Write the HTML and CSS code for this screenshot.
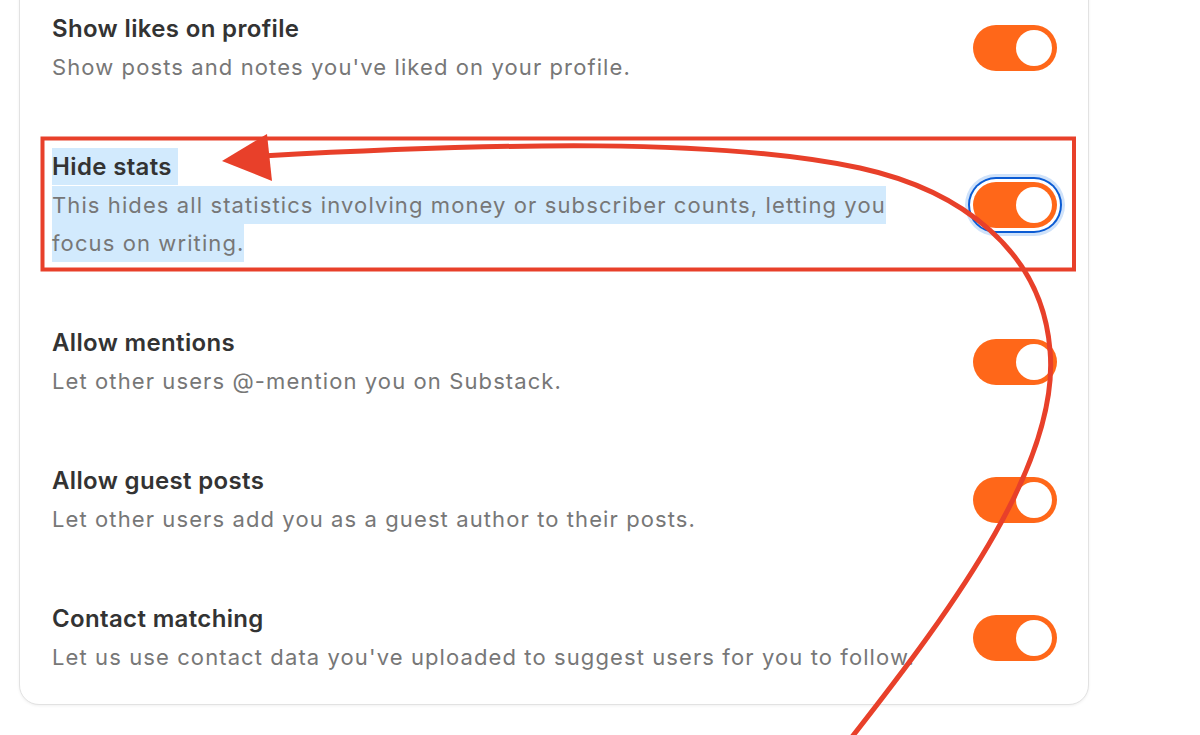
FILE: index.html
```html
<!DOCTYPE html>
<html lang="en">
<head>
<meta charset="utf-8">
<title>Settings</title>
<link rel="stylesheet" href="styles.css">
</head>
<body>
<div class="card">
  <div class="row">
    <div class="text">
      <div class="title">Show likes on profile</div>
      <div class="desc">Show posts and notes you've liked on your profile.</div>
    </div>
    <span class="toggle"><span class="knob"></span></span>
  </div>
  <div class="row">
    <div class="text">
      <div class="title"><span class="sel sel-t">Hide stats</span></div>
      <div class="desc"><span class="sel sel-d">This hides all statistics involving money or subscriber counts, letting you focus on writing.</span></div>
    </div>
    <span class="toggle focus"><span class="knob"></span></span>
  </div>
  <div class="row">
    <div class="text">
      <div class="title">Allow mentions</div>
      <div class="desc">Let other users @-mention you on Substack.</div>
    </div>
    <span class="toggle"><span class="knob"></span></span>
  </div>
  <div class="row">
    <div class="text">
      <div class="title">Allow guest posts</div>
      <div class="desc">Let other users add you as a guest author to their posts.</div>
    </div>
    <span class="toggle"><span class="knob"></span></span>
  </div>
  <div class="row">
    <div class="text">
      <div class="title">Contact matching</div>
      <div class="desc">Let us use contact data you've uploaded to suggest users for you to follow.</div>
    </div>
    <span class="toggle"><span class="knob"></span></span>
  </div>
</div>
<svg class="annot" width="1200" height="735" viewBox="0 0 1200 735" xmlns="http://www.w3.org/2000/svg">
  <rect x="42.5" y="138.5" width="1031.5" height="131" fill="none" stroke="#e8402a" stroke-width="4"/>
  <path d="M 848 742 C 960 600, 1060 460, 1050 350 C 1042 250, 960 190, 860 168 C 720 138, 500 143, 262 156" fill="none" stroke="#e8402a" stroke-width="5" stroke-linecap="round"/>
  <polygon points="222,161 267,134 272,181" fill="#e8402a"/>
</svg>
</body>
</html>
```
FILE: styles.css
```css
html, body {
  margin: 0;
  padding: 0;
  background: #ffffff;
}

body {
  width: 1200px;
  height: 735px;
  overflow: hidden;
  position: relative;
  font-family: Inter, "Noto Sans", "Liberation Sans", sans-serif;
}

.card {
  box-sizing: border-box;
  width: 1070px;
  margin: -20px 0 0 19px;
  padding: 29px 31px 28px 32px;
  border: 1px solid #e2e2e2;
  border-radius: 0 0 20px 20px;
  box-shadow: 0 1px 3px rgba(0, 0, 0, 0.06);
  background: #fff;
  display: flex;
  flex-direction: column;
  gap: 62px;
}

.row {
  display: flex;
  align-items: center;
  justify-content: space-between;
}

.text {
  width: 885px;
}

.title {
  font-size: 24px;
  font-weight: 600;
  line-height: 38px;
  letter-spacing: 0.35px;
  color: #333333;
}

.desc {
  font-size: 22px;
  font-weight: 400;
  line-height: 38px;
  letter-spacing: 1.1px;
  color: #777777;
}

.sel {
  background: #d2eafd;
  -webkit-box-decoration-break: clone;
  box-decoration-break: clone;
}

.sel-t {
  padding: 4px 6px 4px 0;
}

.sel-d {
  padding: 6px 0;
}

.toggle {
  box-sizing: border-box;
  flex-shrink: 0;
  width: 84px;
  height: 46px;
  padding: 5px;
  border-radius: 23px;
  background: #ff6719;
  display: flex;
  justify-content: flex-end;
  align-items: center;
}

.toggle.focus {
  box-shadow: 0 0 0 3px #ffffff, 0 0 0 5px #0b5bd3, 0 0 0 8px #cfe2fa;
}

.knob {
  width: 36px;
  height: 36px;
  border-radius: 50%;
  background: #ffffff;
}

.annot {
  position: absolute;
  top: 0;
  left: 0;
  pointer-events: none;
}
```
